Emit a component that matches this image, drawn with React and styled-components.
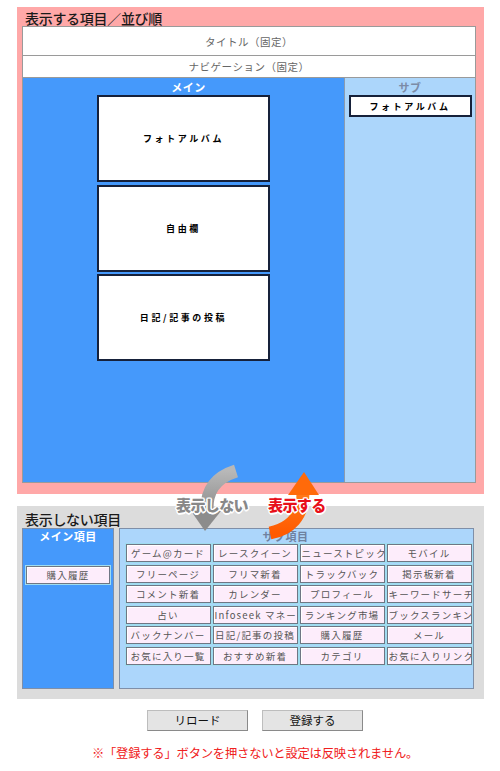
import React from "react";
import styled, { createGlobalStyle } from "styled-components";

const Global = createGlobalStyle`
  html, body { margin: 0; padding: 0; background: #fff; }
  body { font-family: "Noto Sans CJK JP", "Noto Sans", sans-serif; color: #111; }
`;

const Page = styled.div`
  position: relative;
  width: 500px;
  height: 771px;
  padding-top: 7px;
  box-sizing: border-box;
`;

const Section = styled.section`
  margin-left: 17px;
  margin-top: ${(p) => p.$mt || 0}px;
  width: 467px;
  box-sizing: border-box;
  background: ${(p) => p.$bg};
  padding: ${(p) => p.$pad};
`;

const SectionTitle = styled.h2`
  margin: 0;
  font-size: 14px;
  font-weight: 500;
  line-height: ${(p) => p.$lh || "15px"};
  padding-left: 3px;
  color: #1a1a1a;
  letter-spacing: -0.3px;
`;

const Frame = styled.div`
  border: 1px solid #9a9a9a;
  background: #fff;
`;

const FixedRow = styled.div`
  height: ${(p) => p.$h}px;
  border-bottom: 1px solid #9a9a9a;
  display: flex;
  align-items: center;
  justify-content: center;
  font-size: 10.5px;
  color: #666;
  letter-spacing: 0.5px;
`;

const Columns = styled.div`
  display: flex;
  height: 404px;
`;

const MainCol = styled.div`
  flex: 0 0 321px;
  background: #4599fb;
  display: flex;
  flex-direction: column;
  align-items: center;
`;

const SubCol = styled.div`
  flex: 1;
  background: #acd6fb;
  border-left: 1px solid #8a9bb0;
  display: flex;
  flex-direction: column;
  align-items: center;
`;

const ColLabel = styled.div`
  font-size: 11px;
  font-weight: 700;
  line-height: 14px;
  margin-top: ${(p) => (p.$tight ? 0 : 2)}px;
  margin-bottom: 1px;
  color: ${(p) => p.$color};
  padding-left: ${(p) => p.$shiftL || 0}px;
  padding-right: ${(p) => p.$shiftR || 0}px;
  letter-spacing: 0.5px;
`;

const MainBox = styled.div`
  width: 173px;
  height: 87px;
  box-sizing: border-box;
  background: #fff;
  border: 2px solid #16213a;
  margin-bottom: ${(p) => (p.$last ? 0 : 2.5)}px;
  display: flex;
  align-items: center;
  justify-content: center;
  font-size: 9px;
  font-weight: 700;
  letter-spacing: 2.6px;
  color: #000;
`;

const SubBox = styled.div`
  width: 123px;
  height: 22px;
  box-sizing: border-box;
  background: #fff;
  border: 2px solid #16213a;
  display: flex;
  align-items: center;
  justify-content: center;
  font-size: 9px;
  font-weight: 700;
  letter-spacing: 2.6px;
  color: #000;
`;

const HiddenRow = styled.div`
  display: flex;
  gap: 5px;
  height: 161px;
`;

const HiddenMain = styled.div`
  flex: 0 0 92px;
  box-sizing: border-box;
  background: #4599fb;
  border: 1px solid #7f8fa8;
  display: flex;
  flex-direction: column;
  align-items: center;
`;

const Spacer = styled.div`
  height: ${(p) => p.$h}px;
`;

const HiddenSub = styled.div`
  flex: 0 0 355px;
  box-sizing: border-box;
  background: #acd6fb;
  border: 1px solid #7f8fa8;
  display: flex;
  flex-direction: column;
  align-items: center;
`;

const ItemGrid = styled.div`
  display: grid;
  grid-template-columns: repeat(4, 85px);
  grid-auto-rows: 18px;
  column-gap: 2px;
  row-gap: 2.6px;
  margin-left: 4px;
`;

const Item = styled.div`
  box-sizing: border-box;
  width: ${(p) => p.$w || 85}px;
  height: 18px;
  background: #fdedfb;
  border: 1px solid #6f7684;
  box-shadow: inset 1px 1px 0 #fff, 0 0 0 1px #9fdcef;
  font-size: 9.5px;
  line-height: 16px;
  color: #555;
  letter-spacing: 1.2px;
  text-align: center;
  white-space: nowrap;
  overflow: hidden;
  padding: 0 1px;
`;

const Footer = styled.div`
  display: flex;
  flex-direction: column;
  align-items: center;
  padding-left: 10px;
`;

const Buttons = styled.div`
  display: flex;
  gap: 14px;
  margin-top: 11px;
`;

const Button = styled.button`
  width: 101px;
  height: 21px;
  padding: 0;
  background: #e4e4e4;
  border: 1px solid #8a8a8a;
  border-top-color: #bdbdbd;
  border-left-color: #bdbdbd;
  font-family: "Noto Sans CJK JP", sans-serif;
  font-size: 11.5px;
  color: #111;
  line-height: 19px;
`;

const Note = styled.p`
  margin: 14px 0 0;
  font-size: 12.3px;
  line-height: 16px;
  color: #f02020;
  letter-spacing: -0.2px;
`;

const ArrowLayer = styled.div`
  position: absolute;
  left: 160px;
  top: 460px;
  width: 180px;
  height: 80px;
  pointer-events: none;
`;

const ArrowText = styled.span`
  position: absolute;
  top: ${(p) => p.$top}px;
  left: ${(p) => p.$left}px;
  font-size: 15px;
  font-weight: 900;
  line-height: 16px;
  letter-spacing: -0.6px;
  color: ${(p) => p.$color};
  text-shadow: -1px -1px 0 #fff, 1px -1px 0 #fff, -1px 1px 0 #fff, 1px 1px 0 #fff,
    0 -1.5px 0 #fff, 0 1.5px 0 #fff, -1.5px 0 0 #fff, 1.5px 0 0 #fff;
`;

const subItems = [
  "ゲーム@カード", "レースクイーン", "ニューストピックス", "モバイル",
  "フリーページ", "フリマ新着", "トラックバック", "掲示板新着",
  "コメント新着", "カレンダー", "プロフィール", "キーワードサーチ",
  "占い", "Infoseek マネー", "ランキング市場", "ブックスランキング",
  "バックナンバー", "日記/記事の投稿", "購入履歴", "メール",
  "お気に入り一覧", "おすすめ新着", "カテゴリ", "お気に入りリンク",
];

export default function App() {
  return (
    <>
      <Global />
      <Page>
        <Section $bg="#ffa8a8" $pad="4px 8px 11px 5px">
          <SectionTitle>表示する項目／並び順</SectionTitle>
          <Frame>
            <FixedRow $h={28}>タイトル（固定）</FixedRow>
            <FixedRow $h={21}>ナビゲーション（固定）</FixedRow>
            <Columns>
              <MainCol>
                <ColLabel $color="#fff" $shiftL={10}>メイン</ColLabel>
                <MainBox>フォトアルバム</MainBox>
                <MainBox>自由欄</MainBox>
                <MainBox $last>日記/記事の投稿</MainBox>
              </MainCol>
              <SubCol>
                <ColLabel $color="#7b8ba6">サブ</ColLabel>
                <SubBox>フォトアルバム</SubBox>
              </SubCol>
            </Columns>
          </Frame>
        </Section>

        <Section $bg="#dcdcdc" $pad="4px 10px 10px 5px" $mt={12}>
          <SectionTitle $lh="18px">表示しない項目</SectionTitle>
          <HiddenRow>
            <HiddenMain>
              <ColLabel $color="#fff" $tight>メイン項目</ColLabel>
              <Spacer $h={22} />
              <Item $w={84}>購入履歴</Item>
            </HiddenMain>
            <HiddenSub>
              <ColLabel $color="#6f82a0" $shiftR={22} $tight>サブ項目</ColLabel>
              <ItemGrid>
                {subItems.map((s, i) => (
                  <Item key={i}>{s}</Item>
                ))}
              </ItemGrid>
            </HiddenSub>
          </HiddenRow>
        </Section>

        <Footer>
          <Buttons>
            <Button>リロード</Button>
            <Button>登録する</Button>
          </Buttons>
          <Note>※「登録する」ボタンを押さないと設定は反映されません。</Note>
        </Footer>

        <ArrowLayer>
          <svg width="180" height="80" viewBox="160 460 180 80">
            <defs>
              <linearGradient id="ga" x1="0" y1="0" x2="0" y2="1">
                <stop offset="0" stopColor="#b8b8b8" />
                <stop offset="1" stopColor="#8c8c8c" />
              </linearGradient>
              <linearGradient id="oa" x1="0" y1="1" x2="0" y2="0">
                <stop offset="0" stopColor="#ff5a00" />
                <stop offset="1" stopColor="#ff7a1a" />
              </linearGradient>
            </defs>
            <path d="M 236 471 C 214 478 206 492 207 512" fill="none" stroke="url(#ga)" strokeWidth="13" />
            <polygon points="191,511 221,511 205,531" fill="#8c8c8c" />
            <path d="M 270 533 C 290 529 303 516 303 493" fill="none" stroke="url(#oa)" strokeWidth="13" />
            <polygon points="288,495 319,495 304,472" fill="#ff6a0a" />
          </svg>
          <ArrowText $left={16} $top={37} $color="#888">表示しない</ArrowText>
          <ArrowText $left={108} $top={37} $color="#e8101a">表示する</ArrowText>
        </ArrowLayer>
      </Page>
    </>
  );
}
